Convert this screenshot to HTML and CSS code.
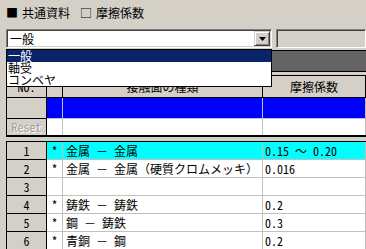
FILE: index.html
```html
<!DOCTYPE html>
<html lang="ja">
<head>
    <meta charset="UTF-8">
    <title>摩擦係数</title>
    <link rel="stylesheet" href="styles.css">
</head>
<body>
    <div class="options">
        <span class="opt"><span class="box">■</span>共通資料</span>
        <span class="opt"><span class="box">□</span>摩擦係数</span>
    </div>

    <div class="combo-row">
        <div class="combo">
            <span class="combo-text">一般</span>
            <span class="combo-btn">
                <svg width="7" height="4" viewBox="0 0 7 4"><path d="M0 0h7L3.5 4z" fill="#000"/></svg>
            </span>
        </div>
        <div class="field"></div>
        <ul class="dropdown">
            <li class="selected">一般</li>
            <li>軸受</li>
            <li>コンベヤ</li>
        </ul>
    </div>

    <div class="band"></div>

    <!-- 入力用グリッド -->
    <div class="grid grid-top">
        <div class="row head">
            <div class="cell hdr num">NO.</div>
            <div class="cell hdr">*</div>
            <div class="cell hdr">接触面の種類</div>
            <div class="cell hdr">摩擦係数</div>
        </div>
        <div class="row edit">
            <div class="cell rh"></div>
            <div class="cell blue"></div>
            <div class="cell blue"></div>
            <div class="cell blue"></div>
        </div>
        <div class="row reset">
            <div class="cell rh disabled num">Reset</div>
            <div class="cell"></div>
            <div class="cell"></div>
            <div class="cell"></div>
        </div>
    </div>

    <!-- 一覧グリッド -->
    <div class="grid grid-list">
        <div class="row data current">
            <div class="cell rh num">1</div>
            <div class="cell mark">*</div>
            <div class="cell name">金属&ensp;－&ensp;金属</div>
            <div class="cell val"><span class="num">0.15</span>&ensp;～&ensp;<span class="num">0.20</span></div>
        </div>
        <div class="row data">
            <div class="cell rh num">2</div>
            <div class="cell mark">*</div>
            <div class="cell name">金属&ensp;－&ensp;金属（硬質クロムメッキ）</div>
            <div class="cell val num">0.016</div>
        </div>
        <div class="row data">
            <div class="cell rh num">3</div>
            <div class="cell mark"></div>
            <div class="cell name"></div>
            <div class="cell val"></div>
        </div>
        <div class="row data">
            <div class="cell rh num">4</div>
            <div class="cell mark">*</div>
            <div class="cell name">鋳鉄&ensp;－&ensp;鋳鉄</div>
            <div class="cell val num">0.2</div>
        </div>
        <div class="row data">
            <div class="cell rh num">5</div>
            <div class="cell mark">*</div>
            <div class="cell name">鋼&ensp;－&ensp;鋳鉄</div>
            <div class="cell val num">0.3</div>
        </div>
        <div class="row data">
            <div class="cell rh num">6</div>
            <div class="cell mark">*</div>
            <div class="cell name">青銅&ensp;－&ensp;鋼</div>
            <div class="cell val num">0.2</div>
        </div>
    </div>
</body>
</html>
```

FILE: styles.css
```css
body {
    margin: 0;
    background: #d4d0c8;
    font-family: "Noto Sans CJK JP", "DejaVu Sans", sans-serif;
    font-size: 12px;
    line-height: 12px;
    color: #000;
    overflow: hidden;
    height: 249px;
}
.num {
    font-feature-settings: "hwid";
}
.options {
    padding: 7px 0 0 6px;
    height: 12px;
    display: flex;
    gap: 10px;
}
.opt .box {
    display: inline-block;
    width: 10px;
    margin-right: 6px;
}
.combo-row {
    position: relative;
    display: flex;
    gap: 4px;
    margin: 10px 0 0 6px;
    height: 19px;
}
.combo, .field {
    box-sizing: border-box;
    height: 19px;
    border: 1px solid;
    border-color: #808080 #fff #fff #808080;
    box-shadow: inset 1px 1px #404040, inset -1px -1px #d4d0c8;
}
.combo {
    width: 266px;
    background: #fff;
    display: flex;
    align-items: center;
    justify-content: space-between;
    padding: 0 1px 0 3px;
}
.combo-btn {
    box-sizing: border-box;
    width: 16px;
    height: 15px;
    background: #d4d0c8;
    border: 1px solid;
    border-color: #d4d0c8 #404040 #404040 #d4d0c8;
    box-shadow: inset 1px 1px #fff, inset -1px -1px #808080;
    display: flex;
    align-items: center;
    justify-content: center;
}
.field {
    flex: 1;
    background: #d4d0c8;
}
.dropdown {
    position: absolute;
    left: 0;
    top: 20px;
    width: 266px;
    height: 38px;
    box-sizing: border-box;
    margin: 0;
    padding: 0;
    list-style: none;
    background: #fff;
    border: 1px solid #000;
    z-index: 2;
}
.dropdown li {
    height: 12px;
    padding-left: 1px;
}
.dropdown .selected {
    background: #0a246a;
    color: #fff;
}
.band {
    margin: 2px 0 0 6px;
    height: 22px;
    box-sizing: border-box;
    background: #646464;
    border-top: 1px solid #000;
    border-bottom: 1px solid #000;
}
.grid {
    margin-left: 6px;
    border-left: 1px solid #000;
    border-top: 1px solid #000;
}
.grid-top {
    margin-top: 3px;
    border-bottom: 2px solid #000;
}
.grid-list {
    margin-top: 4px;
}
.row {
    display: grid;
    grid-template-columns: 40px 16px 200px 1fr;
}
.cell {
    box-sizing: border-box;
    border-right: 1px solid #c0c0c0;
    border-bottom: 1px solid #c0c0c0;
    background: #fff;
    white-space: nowrap;
    overflow: hidden;
    display: flex;
    align-items: center;
}
.head .cell {
    height: 22px;
    background: #d4d0c8;
    border-color: #000;
    justify-content: center;
}
.edit .cell {
    height: 21px;
}
.reset .cell {
    height: 16px;
    border-bottom: none;
}
.cell.rh {
    background: #d4d0c8;
    border-color: #000;
    justify-content: center;
}
.cell.blue {
    background: #0000ff;
}
.disabled {
    color: #a0a0a0;
    text-shadow: 1px 1px #fff;
}
.data .cell {
    height: 18px;
}
.mark {
    justify-content: center;
}
.name {
    padding-left: 3px;
}
.val {
    padding-left: 2px;
}
.current .cell:not(.rh) {
    background: #00ffff;
}
```
